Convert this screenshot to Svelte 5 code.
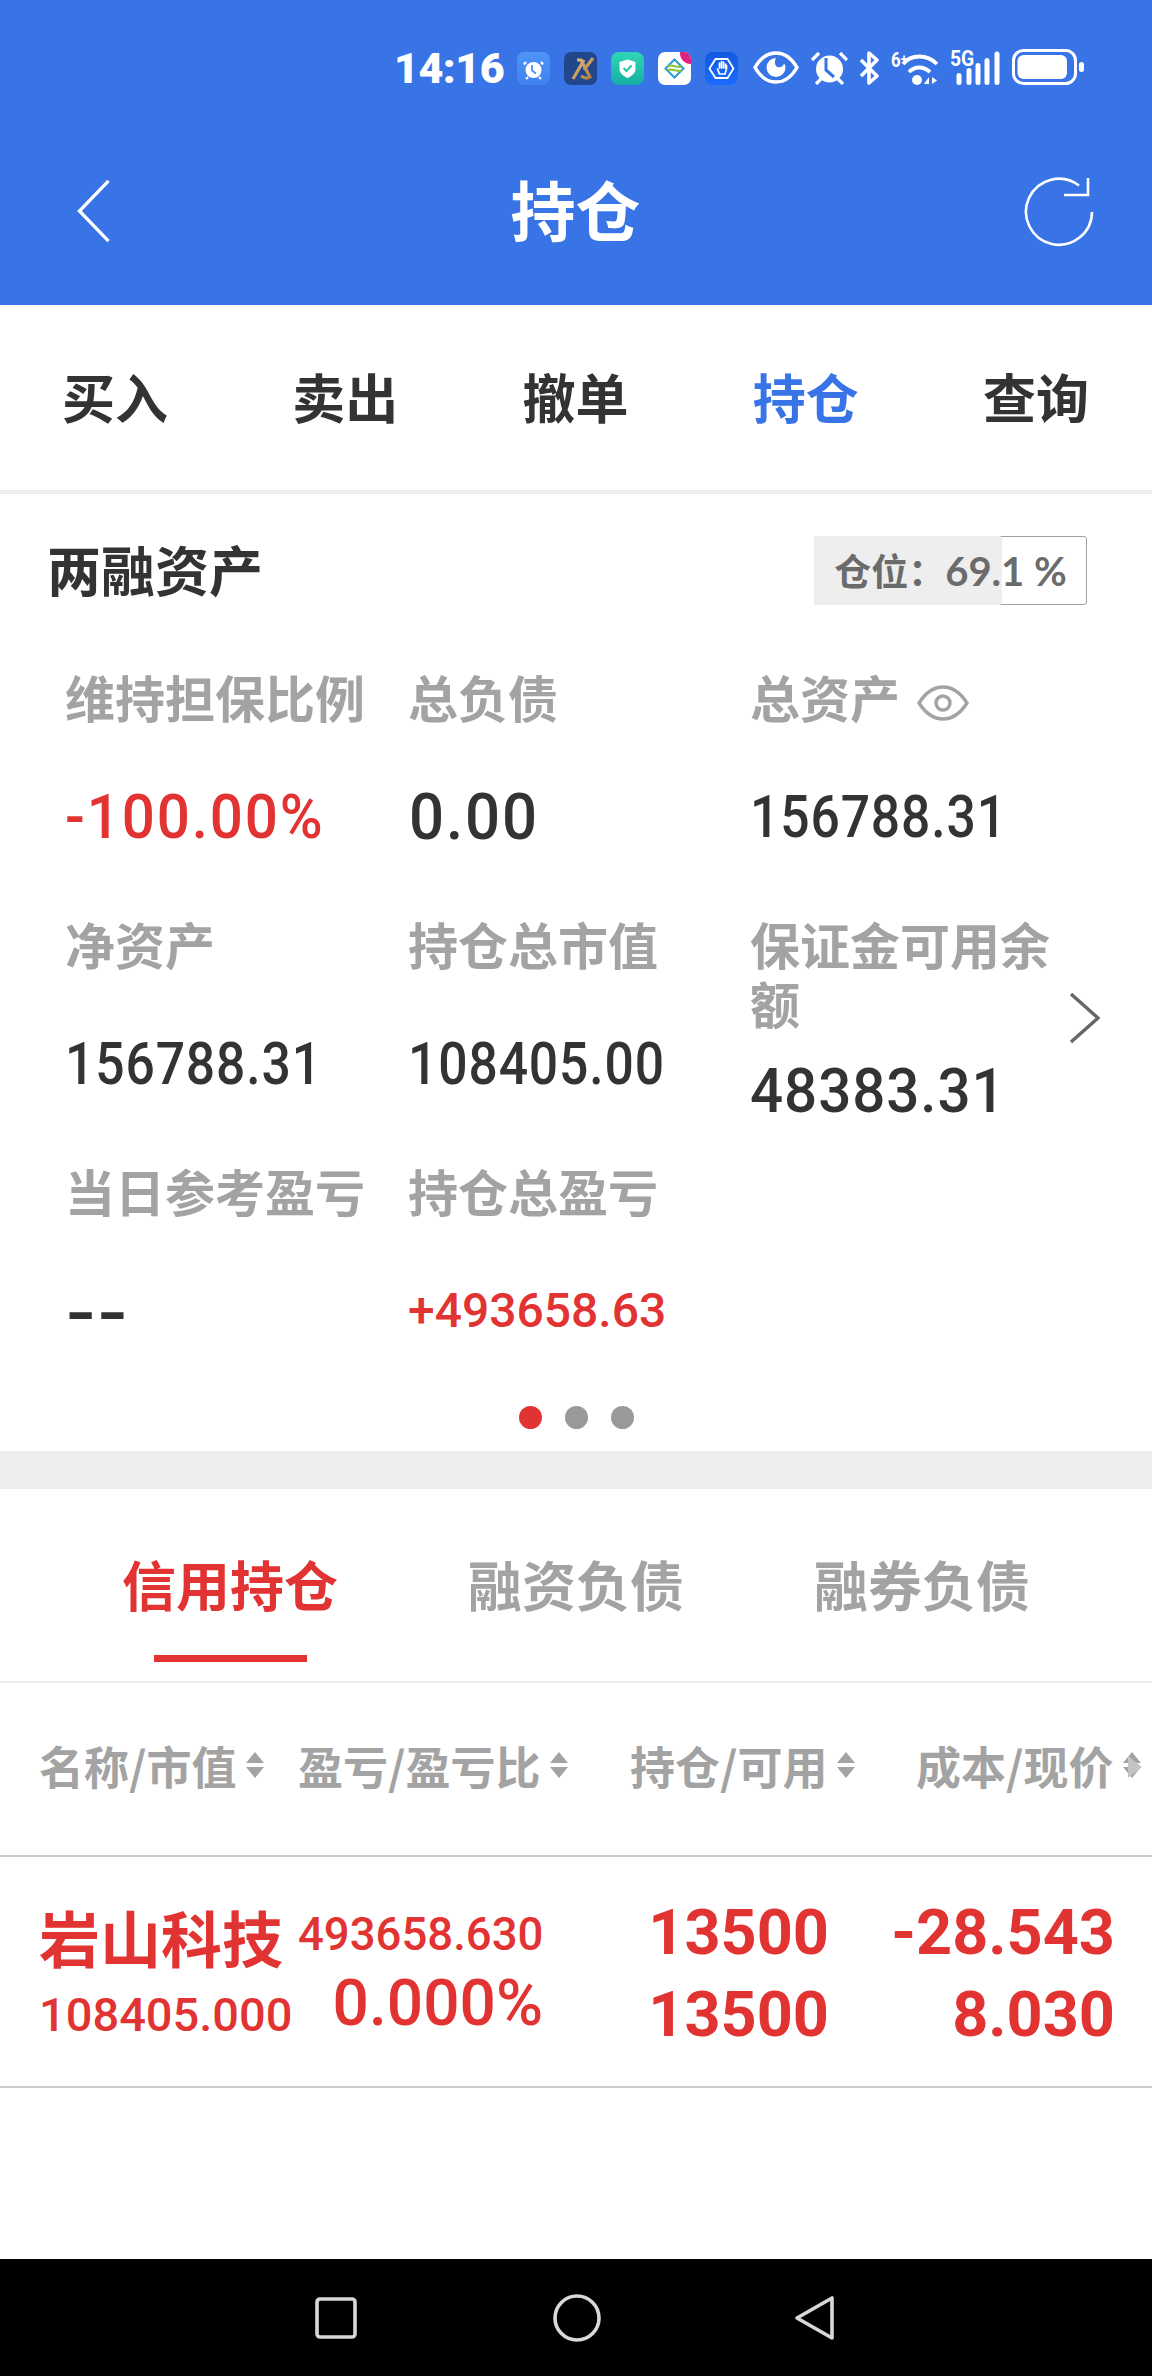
<script>
  const tabs = ['买入', '卖出', '撤单', '持仓', '查询'];
  const subTabs = ['信用持仓', '融资负债', '融券负债'];
  const heads = [
    { label: '名称/市值', cls: 'c1' },
    { label: '盈亏/盈亏比', cls: 'c2' },
    { label: '持仓/可用', cls: 'c3' },
    { label: '成本/现价', cls: 'c4' }
  ];
</script>

<div class="page">
  <header class="top">
    <div class="status">
      <span class="time">14:16</span>
      <svg class="app" viewBox="0 0 33 33"><defs><linearGradient id="a1" x1="0" y1="0" x2="0" y2="1"><stop offset="0" stop-color="#4f95f6"/><stop offset="1" stop-color="#3f82f0"/></linearGradient></defs><rect width="33" height="33" rx="7" fill="url(#a1)"/><circle cx="16.500" cy="18" r="8" fill="#fff"/><path d="M9 10l-2 2.500M24 10l2 2.500M11 25l-2 2M22 25l2 2" stroke="#fff" stroke-width="2.200"/><path d="M15 13v5.500l4 3" stroke="#4a8ff5" stroke-width="1.800" fill="none"/></svg>
      <svg class="app" viewBox="0 0 33 33"><defs><linearGradient id="a2" x1="0" y1="0" x2="1" y2="1"><stop offset="0" stop-color="#e3c088"/><stop offset="1" stop-color="#a9793f"/></linearGradient></defs><rect width="33" height="33" rx="7" fill="#22468a"/><path d="M9 27L20 8M13 8h4l9 17c-3 2-6 1-9-1M20 18L29 6" fill="none" stroke="url(#a2)" stroke-width="3.200"/></svg>
      <svg class="app" viewBox="0 0 33 33"><defs><linearGradient id="sh" x1="0" y1="0" x2="0" y2="1"><stop offset="0" stop-color="#2fd6b6"/><stop offset="1" stop-color="#18aea3"/></linearGradient></defs><rect width="33" height="33" rx="8" fill="url(#sh)"/><path d="M16.500 7.500l8 2.500v7c0 4-3.500 7-8 9-4.500-2-8-5-8-9v-7z" fill="#fff"/><path d="M12.500 16l3 3 5-5.500" stroke="#27c4ad" stroke-width="2" fill="none"/></svg>
      <svg class="app" viewBox="0 0 33 33"><rect width="33" height="33" rx="7" fill="#fff"/><path d="M22 0h4a7 7 0 0 1 7 7v5a11 11 0 0 1-11-12z" fill="#e0227f"/><path d="M16.500 7.500l9 9-9 9-9-9z" fill="none" stroke="#2c9bd6" stroke-width="2"/><path d="M10 14.500c4-3 9 2 13 0M10 18.500c4-3 9 2 13 0" fill="none" stroke="#8cc63f" stroke-width="2.200"/></svg>
      <svg class="app" viewBox="0 0 33 33"><defs><linearGradient id="a5" x1="0" y1="0" x2="0" y2="1"><stop offset="0" stop-color="#1259e0"/><stop offset="1" stop-color="#1a6cff"/></linearGradient></defs><rect width="33" height="33" rx="8" fill="url(#a5)"/><path d="M10.500 7h12l6 9.500-6 9.500h-12l-6-9.500z" fill="none" stroke="#fff" stroke-width="1.800"/><path d="M12.500 17l2 5h5.500l1.500-5v-3.500M14.500 16v-5M16.500 16v-6.500M18.500 16v-6M20.500 16v-4" fill="none" stroke="#fff" stroke-width="1.700" stroke-linecap="round"/></svg>
      <svg class="eye" viewBox="0 0 46 33"><path d="M2 16.500C8 6 15 2 23 2s15 4 21 14.500C38 27 31 31 23 31S8 27 2 16.500z" fill="none" stroke="#fff" stroke-width="3.400"/><path d="M23 7a9.500 9.500 0 1 0 9.500 9.500c0-1-.5-3-1.500-4-1 4-6 5-8 2.500-1.500-2-1.500-5.500 0-8z" fill="#fff"/></svg>
      <svg class="alarm" viewBox="0 0 37 34"><circle cx="18.500" cy="18" r="13.500" fill="#fff"/><path d="M1 9l7-7M36 9l-7-7M5 33l5-5M32 33l-5-5" stroke="#fff" stroke-width="3.200" fill="none"/><path d="M15 7v12l8 7" stroke="#3874e6" stroke-width="3" fill="none"/></svg>
      <svg class="bt" viewBox="0 0 23 34"><path d="M3 9l16 16-8 7V2l8 7L3 25" fill="none" stroke="#fff" stroke-width="3.600" stroke-linejoin="round"/></svg>
      <span class="wifi-wrap">
        <svg class="wifi" viewBox="0 0 49 34"><path d="M12 13C20 3 36 3 46 13M18 21c6-6 14-6 21 0" fill="none" stroke="#fff" stroke-width="3.800"/><circle cx="26" cy="29" r="5" fill="#fff"/><path d="M33 33l5-7v7zM41 26v7l5-3.500z" fill="#fff"/></svg>
        <span class="six">6<small>+</small></span>
      </span>
      <span class="sig-wrap">
        <span class="five">5G</span>
        <svg class="sig" viewBox="0 0 50 34"><path d="M9 31.500v-7M19 31.500v-12M28 31.500v-17M37 31.500v-22M47 31.500V3" stroke="#fff" stroke-width="5" stroke-linecap="round"/></svg>
      </span>
      <svg class="bat" viewBox="0 0 72 36"><rect x="1.500" y="1.500" width="62" height="33" rx="10" fill="none" stroke="#fff" stroke-width="3"/><rect x="5.500" y="6" width="49.500" height="24" rx="6" fill="#fff"/><rect x="67" y="13" width="5" height="10" rx="2.500" fill="#fff"/></svg>
    </div>
    <div class="bar">
      <svg class="back" viewBox="0 0 36 66"><path d="M33 2L3 33l30 31" fill="none" stroke="#fff" stroke-width="3.400"/></svg>
      <h1>持仓</h1>
      <svg class="refresh" viewBox="0 0 72 72"><path d="M69 36A33 33 0 1 1 56 9.500" fill="none" stroke="#fff" stroke-width="2.600"/><path d="M41 19h24V2" fill="none" stroke="#fff" stroke-width="2.600"/></svg>
    </div>
  </header>

  <nav class="tabs">
    {#each tabs as t, i}
      <span class:on={i === 3}>{t}</span>
    {/each}
  </nav>

  <section class="assets">
    <div class="assets-head">
      <h2>两融资产</h2>
      <div class="pos"><span class="fill"></span><span class="pos-text"><span class="pos-cjk">仓位：</span>69.1 %</span></div>
    </div>
    <div class="grid-wrap">
      <div class="grid">
        <div class="cell"><div class="lb">维持担保比例</div><div class="val neg">-100.00%</div></div>
        <div class="cell"><div class="lb">总负债</div><div class="val zero">0.00</div></div>
        <div class="cell"><div class="lb">总资产<svg class="peek" viewBox="0 0 52 36"><path d="M2 18C9 7 17 2 26 2s17 5 24 16c-7 11-15 16-24 16S9 29 2 18z" fill="none" stroke="#a3a3a3" stroke-width="3.400"/><circle cx="26" cy="18" r="7" fill="none" stroke="#a3a3a3" stroke-width="3.400"/></svg></div><div class="val">156788.31</div></div>
        <div class="cell"><div class="lb">净资产</div><div class="val">156788.31</div></div>
        <div class="cell"><div class="lb">持仓总市值</div><div class="val">108405.00</div></div>
        <div class="cell"><div class="lb">保证金可用余额</div><div class="val mid">48383.31</div></div>
        <div class="cell"><div class="lb">当日参考盈亏</div><div class="val dash">--</div></div>
        <div class="cell"><div class="lb">持仓总盈亏</div><div class="val plus">+493658.63</div></div>
      </div>
      <svg class="next" viewBox="0 0 31 52"><path d="M2 2l27 24L2 50" fill="none" stroke="#666" stroke-width="3.400"/></svg>
    </div>
    <div class="dots"><i class="active"></i><i></i><i></i></div>
  </section>

  <section class="holdings">
    <div class="subtabs">
      {#each subTabs as t, i}
        <span class:on={i === 0}>{t}</span>
      {/each}
    </div>
    <div class="thead">
      {#each heads as h}
        <div class="th {h.cls}">{h.label}<span class="sort"><b></b><em></em></span></div>
      {/each}
      <span class="more"></span>
    </div>
    <div class="row">
      <div class="c1"><div class="name">岩山科技</div><div class="mv">108405.000</div></div>
      <div class="c2"><div class="pl">493658.630</div><div class="ratio">0.000%</div></div>
      <div class="c3"><div>13500</div><div>13500</div></div>
      <div class="c4"><div>-28.543</div><div>8.030</div></div>
    </div>
  </section>

  <div class="spacer"></div>

  <footer class="sysnav">
    <svg class="n-sq" viewBox="0 0 42 42"><rect x="2" y="2" width="38" height="38" rx="3" fill="none" stroke="#d8d8d8" stroke-width="3.600"/></svg>
    <svg class="n-ci" viewBox="0 0 48 48"><circle cx="24" cy="24" r="22" fill="none" stroke="#d8d8d8" stroke-width="3.600"/></svg>
    <svg class="n-tr" viewBox="0 0 42 46"><path d="M38 3v40L3 23z" fill="none" stroke="#d8d8d8" stroke-width="3.600" stroke-linejoin="round"/></svg>
  </footer>
</div>

<style>
  :global(body) { margin: 0; background: #fff; }
  .page {
    width: 1152px; height: 2376px; display: flex; flex-direction: column;
    font-family: "Noto Sans CJK SC", sans-serif; color: #333; overflow: hidden;
  }
  .top { background: #3874e6; height: 305px; color: #fff; }
  .status { height: 52px; padding: 51px 0 0 394px; display: flex; align-items: flex-start; }
  .time { font: 900 43px/34px Roboto, sans-serif; width: 123px; flex: none; letter-spacing: -.5px; }
  .app { width: 33px; height: 33px; margin: 1px 14px 0 0; flex: none; }
  .eye { width: 46px; height: 33px; margin: 0 12px 0 1px; flex: none; }
  .alarm { width: 37px; height: 34px; margin-right: 10px; flex: none; }
  .bt { width: 23px; height: 34px; margin-right: 10px; flex: none; }
  .wifi-wrap { position: relative; width: 49px; height: 34px; margin-right: 10px; flex: none; }
  .wifi { width: 49px; height: 34px; display: block; }
  .six { position: absolute; left: 0; top: -1px; font: 700 21px/18px Roboto, sans-serif; transform: scaleX(.8); transform-origin: left; }
  .six small { font-size: 15px; vertical-align: 3px; }
  .sig-wrap { position: relative; width: 50px; height: 34px; flex: none; margin-right: 12px; }
  .five { position: absolute; left: 0; top: -1px; font: 700 22px/18px Roboto, sans-serif; transform: scaleX(.88); transform-origin: left; }
  .sig { position: absolute; left: 0; top: 0; width: 50px; height: 34px; }
  .bat { width: 72px; height: 36px; flex: none; margin-top: -2px; }
  .bar { height: 148px; margin-top: 31px; padding: 0 57px 0 76px; display: grid; grid-template-columns: 1fr auto 1fr; align-items: center; }
  .bar h1 { margin: 0 10px 0 -10px; font-size: 65px; font-weight: 700; line-height: 1; }
  .back { width: 36px; height: 64px; margin-top: 6px; }
  .refresh { width: 72px; height: 72px; justify-self: end; margin-top: 8px; }

  .tabs { display: flex; align-items: center; justify-content: space-between; padding: 0 63px 3px 62px; box-sizing: border-box; border-bottom: 4px solid #eee; height: 189px; font-size: 53px; font-weight: 700; }
  .tabs .on { color: #3874e6; }

  .assets { height: 957px; box-sizing: border-box; padding: 40px 0 0; display: flex; flex-direction: column; }
  .assets-head { display: flex; justify-content: space-between; align-items: center; padding: 0 65px 0 47px; height: 70px; }
  .assets-head h2 { margin: 0; font-size: 54px; font-weight: 700; line-height: 70px; }
  .pos { position: relative; align-self: flex-start; margin-top: 2px; width: 273px; height: 69px; box-sizing: border-box; border: 1px solid #a3a3a3; border-radius: 3px; display: flex; align-items: center; justify-content: center; }
  .fill { position: absolute; left: -1px; top: -1px; bottom: -1px; width: 188px; background: #eee; border-radius: 3px; }
  .pos-text { position: relative; font: 700 40px/1 Lato, sans-serif; color: #6b6b6b; white-space: pre; }
  .pos-cjk { font: 700 37px/1 "Noto Sans CJK SC", sans-serif; }
  .grid-wrap { position: relative; padding: 0 0 0 65px; margin-top: 63px; flex: 1; }
  .grid { display: grid; grid-template-columns: 343px 342px 310px; grid-auto-rows: 247px; }
  .cell { display: flex; flex-direction: column; }
  .lb { font-size: 50px; font-weight: 700; line-height: 59px; color: #a3a3a3; }
  .peek { width: 52px; height: 36px; margin-left: 17px; vertical-align: -3px; }
  .val {
    font: 500 59px/58px Roboto, sans-serif; letter-spacing: 1px; margin-top: 62px; color: #333;
    white-space: nowrap; transform: scaleX(.875); transform-origin: left;
  }
  .neg { font-size: 62px; letter-spacing: 2px; transform: scaleX(.94); color: #e23333; }
  .zero { font-size: 65px; letter-spacing: 2px; transform: scaleX(.95); margin-left: 1px; }
  .mid { font-size: 62px; margin-top: 30px; transform: scaleX(.94); }
  .dash { font-size: 62px; font-weight: 700; letter-spacing: 0; transform: scaleX(1.3); margin-top: 64px; }
  .plus { font-size: 48px; letter-spacing: 0; transform: none; color: #e23333; }
  .next { position: absolute; right: 52px; top: 325px; width: 31px; height: 52px; }
  .dots { display: flex; justify-content: center; gap: 23px; height: 0; position: relative; top: -45px; }
  .dots i { width: 23px; height: 23px; border-radius: 50%; background: #999; flex: none; }
  .dots i.active { background: #e23333; }

  .holdings { border-top: 38px solid #eee; flex: none; }
  .subtabs { height: 192px; border-bottom: 2px solid #eee; display: flex; font-size: 54px; font-weight: 700; color: #a3a3a3; padding: 0 122px; justify-content: space-between; align-items: flex-start; }
  .subtabs span { position: relative; margin-top: 57px; line-height: 76px; height: 76px; }
  .subtabs .on { color: #e23333; }
  .subtabs .on::after { content: ""; position: absolute; left: 32px; width: 153px; height: 7px; top: 109px; background: #e23333; }
  .thead { position: relative; height: 174px; padding-bottom: 8px; box-sizing: border-box; border-bottom: 2px solid #ccc; display: flex; align-items: center; font-size: 45px; font-weight: 700; color: #a3a3a3; overflow: hidden; }
  .th { white-space: nowrap; display: flex; align-items: center; flex: none; }
  .thead .c1 { margin-left: 39px; width: 259px; }
  .thead .c2 { width: 332px; }
  .thead .c3 { width: 286px; }
  .sort { display: inline-flex; flex-direction: column; gap: 4px; margin-left: 10px; }
  .sort b { width: 0; height: 0; border: 9px solid transparent; border-top: 0; border-bottom: 11px solid #a3a3a3; }
  .sort em { width: 0; height: 0; border: 9px solid transparent; border-bottom: 0; border-top: 11px solid #a3a3a3; }
  .more { position: absolute; left: 1128px; top: 73px; width: 0; height: 0; border: 11px solid transparent; border-right: 0; border-left: 14px solid #c4c4c4; }
  .row { height: 229px; border-bottom: 2px solid #ccc; display: flex; color: #e23333; font-family: Roboto, sans-serif; font-weight: 700; }
  .row .c1 { margin-left: 39px; width: 259px; padding-top: 45px; flex: none; }
  .name { font: 700 61px/70px "Noto Sans CJK SC", sans-serif; }
  .mv { font-size: 47px; font-weight: 500; line-height: 60px; margin-top: 13px; }
  .row .c2 { width: 243px; text-align: right; padding-top: 48px; flex: none; }
  .pl { font-size: 45.500px; font-weight: 500; line-height: 60px; }
  .ratio { font-size: 64px; font-weight: 500; line-height: 70px; margin: 4px -2px 0 0; }
  .row .c3 { width: 288px; text-align: right; font-size: 63px; padding-top: 35px; line-height: 82px; flex: none; }
  .row .c4 { width: 286px; text-align: right; font-size: 63px; padding-top: 35px; line-height: 82px; flex: none; }
  .spacer { flex: 1; }
  .sysnav { height: 117px; background: #000; flex: none; display: flex; align-items: center; padding-left: 315px; box-sizing: border-box; }
  .n-sq { width: 42px; height: 42px; margin-right: 196px; flex: none; }
  .n-ci { width: 48px; height: 48px; margin-right: 193px; flex: none; }
  .n-tr { width: 42px; height: 46px; flex: none; }
</style>
